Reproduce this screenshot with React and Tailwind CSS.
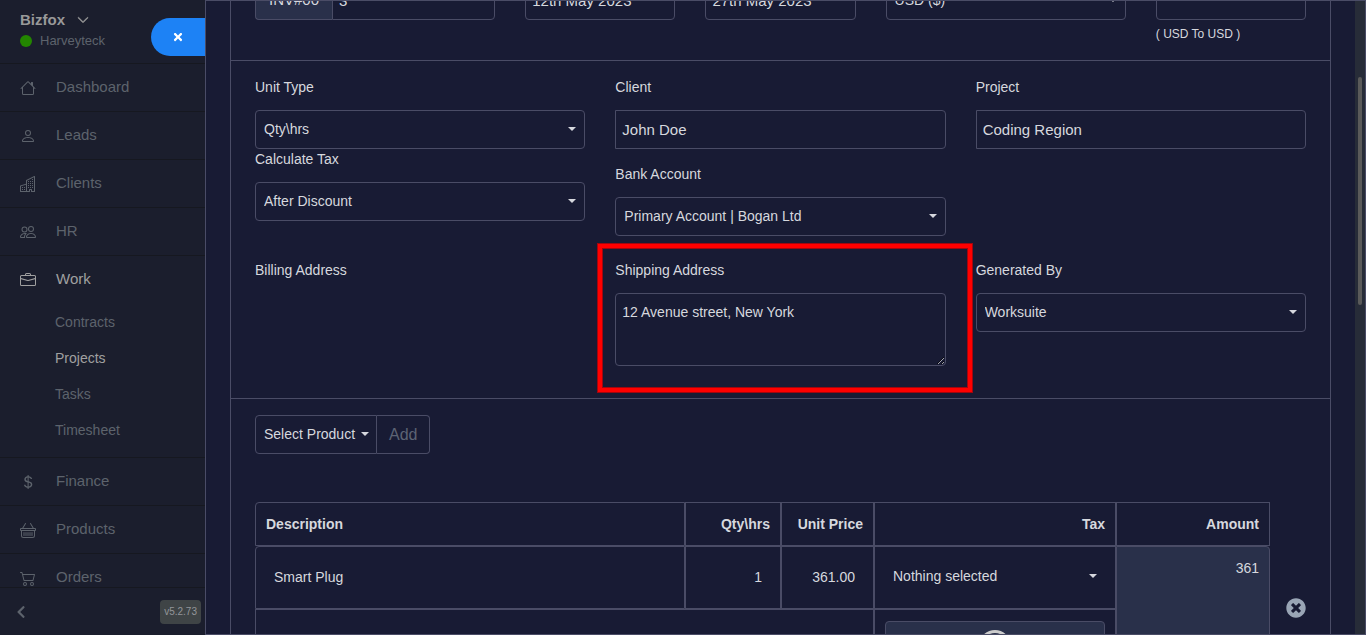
import React from "react";
import {
  BsHouse,
  BsPerson,
  BsBuildings,
  BsPeople,
  BsBriefcase,
  BsCurrencyDollar,
  BsBasket,
  BsCart2,
  BsChevronDown,
  BsCloudUpload,
} from "react-icons/bs";
import { FaTimes, FaTimesCircle, FaChevronLeft } from "react-icons/fa";

const topLinks = [
  { name: "Dashboard", icon: BsHouse },
  { name: "Leads", icon: BsPerson },
  { name: "Clients", icon: BsBuildings },
  { name: "HR", icon: BsPeople },
];

const workLinks = ["Contracts", "Projects", "Tasks", "Timesheet"];

const bottomLinks = [
  { name: "Finance", icon: BsCurrencyDollar },
  { name: "Products", icon: BsBasket },
  { name: "Orders", icon: BsCart2 },
];

const Caret = ({ className }) => (
  <svg
    viewBox="0 0 8 4"
    fill="currentColor"
    className={`pointer-events-none absolute top-1/2 -mt-[3px] h-1 w-2 ${className}`}
  >
    <path d="M0 0h8L4 4z" />
  </svg>
);

const SidebarLink = ({ name, icon: Icon }) => (
  <li className="border-b border-[#161820]">
    <a href="#" className="flex h-[47px] items-center gap-5 pl-5 text-[15px]">
      <Icon className="h-4 w-4" />
      {name}
    </a>
  </li>
);

const Label = ({ htmlFor, children }) => (
  <label htmlFor={htmlFor} className="mb-[13px] block text-sm leading-5">
    {children}
  </label>
);

const Select = ({ id, value, label }) => (
  <div className="relative">
    <select
      id={id}
      aria-label={label}
      className="block h-[39px] w-full appearance-none rounded border border-[#4a4c66] bg-transparent px-2 pb-0.5 text-sm"
    >
      <option>{value}</option>
    </select>
    <Caret className="right-[9px]" />
  </div>
);

const inputClass =
  "block h-[39px] w-full min-w-0 border border-[#4a4c66] bg-transparent px-1.5 text-[15px]";

function Sidebar() {
  return (
    <aside className="relative flex w-[205px] shrink-0 flex-col bg-[#1b1e2d] text-[#5d636c]">
      <div className="flex h-16 shrink-0 flex-col border-b border-[#161820] pl-5 pt-2.5">
        <button className="flex items-center gap-3 text-[15px] font-bold leading-5 text-[#999999]">
          Bizfox
          <BsChevronDown className="h-3 w-3 stroke-1" />
        </button>
        <div className="flex items-center gap-2 text-[13px] leading-[22px]">
          <span className="h-3 w-3 rounded-full bg-[#238600]" />
          Harveyteck
        </div>
      </div>

      {/* Close task panel */}
      <button
        aria-label="Close"
        className="absolute right-0 top-[18px] flex h-[38px] w-[54px] items-center justify-center rounded-l-full bg-[#1d82f5] text-white"
      >
        <FaTimes className="h-3 w-3" />
      </button>

      <nav className="min-h-0 flex-1 overflow-hidden">
        <ul>
          {topLinks.map((link) => (
            <SidebarLink key={link.name} {...link} />
          ))}
          <li className="border-b border-[#161820]">
            <a href="#" className="flex h-[47px] items-center gap-5 pl-5 text-[15px] text-[#a0a0a0]">
              <BsBriefcase className="h-4 w-4" />
              Work
            </a>
            <ul className="pb-[9px] pt-px">
              {workLinks.map((name) => (
                <li key={name}>
                  <a
                    href="#"
                    className={`flex h-9 items-center pl-[55px] text-sm ${
                      name === "Projects" ? "text-[#a0a0a0]" : ""
                    }`}
                  >
                    {name}
                  </a>
                </li>
              ))}
            </ul>
          </li>
          {bottomLinks.map((link) => (
            <SidebarLink key={link.name} {...link} />
          ))}
        </ul>
      </nav>

      <div className="flex h-12 shrink-0 items-center justify-between border-t border-[#161820] pl-3.5 pr-1">
        <button aria-label="Collapse sidebar">
          <FaChevronLeft className="h-3.5 w-3.5" />
        </button>
        <span className="rounded bg-[#3f4446] px-1 text-[10px] leading-6 text-[#93969a]">
          v5.2.73
        </span>
      </div>
    </aside>
  );
}

function InvoiceNumbers() {
  return (
    <div className="-mt-5 grid grid-cols-12 gap-x-[30px] px-6 pb-4">
      <div className="col-span-3 flex">
        <span className="flex h-[39px] w-[77px] shrink-0 items-center justify-center rounded-l border border-r-0 border-[#4a4c66] bg-[#29304a] text-[15px]">
          INV#00
        </span>
        <input
          aria-label="Invoice number"
          defaultValue="3"
          className={`${inputClass} rounded-r`}
        />
      </div>
      <div className="col-span-2">
        <input
          aria-label="Invoice date"
          defaultValue="12th May 2023"
          className={`${inputClass} rounded`}
        />
      </div>
      <div className="col-span-2">
        <input
          aria-label="Due date"
          defaultValue="27th May 2023"
          className={`${inputClass} rounded`}
        />
      </div>
      <div className="col-span-3">
        <Select label="Currency" value="USD ($)" />
      </div>
      <div className="col-span-2">
        <input aria-label="Exchange rate" className={`${inputClass} rounded`} />
        <small className="mt-1 block text-xs leading-5">( USD To USD )</small>
      </div>
    </div>
  );
}

function InvoiceDetails() {
  return (
    <div className="grid grid-cols-3 gap-x-[30px] gap-y-6 border-y border-[#4a4c66] px-6 pb-8 pt-4">
      <div>
        <Label htmlFor="unit">Unit Type</Label>
        <Select id="unit" value="Qty\hrs" />
        <Label htmlFor="tax">Calculate Tax</Label>
        <Select id="tax" value="After Discount" />
      </div>
      <div>
        <Label htmlFor="client">Client</Label>
        <input id="client" defaultValue="John Doe" className={`${inputClass} rounded-r`} />
        <div className="mt-[15px]">
          <Label htmlFor="bank">Bank Account</Label>
          <Select id="bank" value="Primary Account | Bogan Ltd" />
        </div>
      </div>
      <div>
        <Label htmlFor="project">Project</Label>
        <input id="project" defaultValue="Coding Region" className={`${inputClass} rounded-r`} />
      </div>

      <div>
        <span className="block text-sm leading-5">Billing Address</span>
      </div>
      <div className="relative">
        <Label htmlFor="shipping">Shipping Address</Label>
        <textarea
          id="shipping"
          defaultValue="12 Avenue street, New York"
          className="block h-[73px] w-full rounded border border-[#4a4c66] bg-transparent px-1.5 py-2 text-sm"
        />
        {/* Highlight frame */}
        <div className="pointer-events-none absolute -bottom-[26px] -left-[17px] -right-[26px] -top-4 border-4 border-[#ff0000] ring-1 ring-[#a1060e]">
          <div className="h-full border border-[#a1060e]" />
        </div>
      </div>
      <div>
        <Label htmlFor="generated">Generated By</Label>
        <Select id="generated" value="Worksuite" />
      </div>
    </div>
  );
}

function InvoiceItems() {
  return (
    <div className="px-6 pt-4">
      <div className="mb-12 flex">
        <div className="relative">
          <select
            aria-label="Product"
            className="block h-[39px] appearance-none rounded-l border border-[#4a4c66] bg-transparent pb-0.5 pl-2 pr-5 text-sm"
          >
            <option>Select Product</option>
          </select>
          <Caret className="right-2" />
        </div>
        <button className="h-[39px] rounded-r border border-l-0 border-[#4a4c66] px-3 text-base text-[#5d6474]">
          Add
        </button>
      </div>

      <div className="flex">
        <table className="min-w-0 flex-1 table-fixed border-separate border-spacing-0 text-sm [&_td]:border [&_td]:border-[#4a4c66] [&_th]:border [&_th]:border-[#4a4c66]">
          <thead>
            <tr className="h-11 text-right">
              <th className="rounded-tl px-2.5 text-left">Description</th>
              <th className="w-24 px-2.5">Qty\hrs</th>
              <th className="w-[93px] px-2.5">Unit Price</th>
              <th className="w-[242px] px-2.5">Tax</th>
              <th className="w-[154px] px-2.5">Amount</th>
            </tr>
          </thead>
          <tbody>
            <tr className="h-[63px]">
              <td className="rounded-tl px-2.5 pb-0.5">
                <input
                  aria-label="Item name"
                  defaultValue="Smart Plug"
                  className="w-full bg-transparent px-2"
                />
              </td>
              <td className="px-2.5 pb-0.5">
                <input
                  aria-label="Quantity"
                  defaultValue="1"
                  className="w-full bg-transparent px-2 text-right"
                />
              </td>
              <td className="px-2.5 pb-0.5">
                <input
                  aria-label="Unit price"
                  defaultValue="361.00"
                  className="w-full bg-transparent px-2 text-right"
                />
              </td>
              <td className="px-2.5 pb-0.5">
                <div className="relative">
                  <select
                    aria-label="Tax"
                    className="block h-[39px] w-full appearance-none bg-transparent px-2 pb-0.5"
                  >
                    <option>Nothing selected</option>
                  </select>
                  <Caret className="right-2" />
                </div>
              </td>
              <td
                rowSpan={2}
                className="rounded-tr bg-[#29304a] px-2.5 pt-[11px] text-right align-top leading-5"
              >
                361
              </td>
            </tr>
            <tr>
              <td colSpan={3} />
              <td className="px-2.5 py-[11px] align-top">
                <button
                  aria-label="Upload image"
                  className="flex h-24 w-full justify-center rounded border border-[#4a4c66] bg-[#29304a] pt-2 text-[#cccccc]"
                >
                  <BsCloudUpload className="h-12 w-12" />
                </button>
              </td>
            </tr>
          </tbody>
        </table>
        <div className="flex w-9 shrink-0 items-start justify-end pt-24">
          <button aria-label="Remove item" className="text-[#99a5b5]">
            <FaTimesCircle className="h-5 w-5" />
          </button>
        </div>
      </div>
    </div>
  );
}

export default function App() {
  return (
    <div className="flex h-screen overflow-hidden bg-[#181b34] font-['Liberation_Sans',Arial,sans-serif] text-[#d6d8de]">
      <Sidebar />
      <main className="flex min-w-0 flex-1 overflow-hidden border border-[#4a4c66]">
        <div className="min-w-0 flex-1 px-6">
          <div className="border-x border-[#4a4c66]">
            <InvoiceNumbers />
            <InvoiceDetails />
            <InvoiceItems />
          </div>
        </div>
        {/* Scrollbar */}
        <div className="flex w-2.5 shrink-0 justify-center bg-[#272c38] pt-[76px]">
          <div className="h-[228px] w-1 rounded-full bg-[#5a5a5a]" />
        </div>
      </main>
    </div>
  );
}
